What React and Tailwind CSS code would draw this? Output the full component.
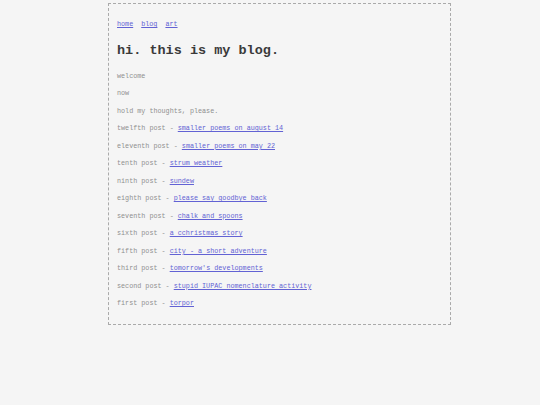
import React from "react";

const posts = [
  ["twelfth post", "smaller poems on august 14"],
  ["eleventh post", "smaller poems on may 22"],
  ["tenth post", "strum weather"],
  ["ninth post", "sundew"],
  ["eighth post", "please say goodbye back"],
  ["seventh post", "chalk and spoons"],
  ["sixth post", "a cchristmas story"],
  ["fifth post", "city - a short adventure"],
  ["third post", "tomorrow's developments"],
  ["second post", "stupid IUPAC nomenclature activity"],
  ["first post", "torpor"],
];

const linkCls = "text-[#6262d4] underline underline-offset-[1px]";

export default function App() {
  return (
    <div className="min-h-[405px] bg-[#f5f5f5] pt-[3px] font-['Liberation_Mono',monospace]">
      <div className="ml-[108px] w-[343px] h-[322px] border border-dashed border-[#aaa] pl-[8px] pt-[15px]">
        {/* top nav */}
        <nav className="flex gap-[8px] text-[6.75px] leading-[10px]">
          <a className={linkCls}>home</a>
          <a className={linkCls}>blog</a>
          <a className={linkCls}>art</a>
        </nav>

        <h1 className="mt-[13px] text-[13.5px] leading-[18px] font-bold text-[#3a3a3a]">
          hi. this is my blog.
        </h1>

        <div className="mt-[7px] flex flex-col text-[6.75px] text-[#8f8f8f]">
          <p className="h-[17.5px] flex items-center">welcome</p>
          <p className="h-[17.5px] flex items-center">now</p>
          <p className="h-[17.5px] flex items-center">hold my thoughts, please.</p>
          {posts.map(([label, title]) => (
            <p key={label} className="h-[17.5px] flex items-center whitespace-pre">
              {label} - <a className={linkCls}>{title}</a>
            </p>
          ))}
        </div>
      </div>
    </div>
  );
}
